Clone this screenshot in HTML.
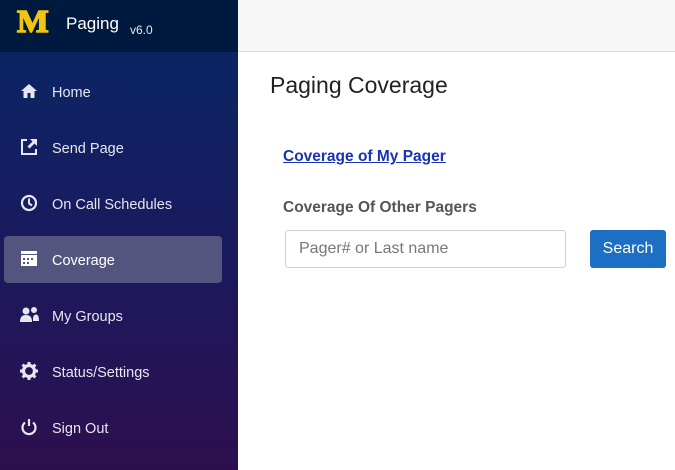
<!DOCTYPE html>
<html><head><meta charset="utf-8"><style>
*{margin:0;padding:0;box-sizing:border-box}
body{width:675px;height:470px;overflow:hidden;font-family:"Liberation Sans",Arial,sans-serif;background:#fff;position:relative}
#side{position:absolute;left:0;top:0;width:238px;height:470px;background:linear-gradient(#0b2564 52px,#1a1a5e 250px,#2d0f4f 470px)}
#hdr{height:52px;background:#001a3f;position:relative}
#logo{position:absolute;left:17px;top:6px;font-family:"Liberation Serif",serif;font-weight:bold;font-size:32px;color:#f2c413;line-height:30px;transform:scaleX(1.05);transform-origin:left;-webkit-text-stroke:1.5px #f2c413}
#title{position:absolute;left:66px;top:14px;color:#fff;font-size:17px}
#ver{position:absolute;left:130px;top:23px;color:#e8e8e8;font-size:12px}
.item{position:absolute;left:4px;width:218px;height:47px;color:#e6e6ee;font-size:14.5px;border-radius:4px}
.item span{position:absolute;left:48px;top:17px}
.item svg{position:absolute;left:16px;top:14px}
.act{background:#54557e;color:#fff}
#topbar{position:absolute;left:238px;top:0;right:0;height:52px;background:#f7f7f7;border-bottom:1px solid #ddd}
h1{position:absolute;left:270px;top:72px;font-weight:normal;font-size:23px;color:#222}
a{position:absolute;left:283px;top:148px;font-size:15.5px;font-weight:bold;color:#1a33b5;text-decoration:underline}
h3{position:absolute;left:283px;top:199px;font-size:15.5px;color:#555}
#inp{position:absolute;left:285px;top:230px;width:281px;height:38px;border:1px solid #ccd;border-radius:3px;font-size:16px;color:#777;padding:9px 13px}
#btn{position:absolute;left:590px;top:230px;width:76px;height:38px;background:#1c6fc2;border-radius:3px;color:#fff;font-size:16px;text-align:center;line-height:37px}
</style></head><body>
<div id="side">
<div id="hdr"><div id="logo">M</div><div id="title">Paging</div><div id="ver">v6.0</div></div>
<div class="item" style="top:68px"><svg width="18" height="18" viewBox="0 0 18 18"><path d="M9 2L1 9h2.5v7h4v-5h3v5h4V9H17z" fill="#e6e6ee"/></svg><span>Home</span></div>
<div class="item" style="top:124px"><svg width="18" height="18" viewBox="0 0 18 18"><path d="M1 1h6v2H3v12h12v-4h2v6H1z" fill="#e6e6ee"/><path d="M10 1h7v7l-2.5-2.5-5 5-2-2 5-5z" fill="#e6e6ee"/></svg><span>Send Page</span></div>
<div class="item" style="top:180px"><svg width="18" height="18" viewBox="0 0 18 18"><circle cx="9" cy="9" r="7" fill="none" stroke="#e6e6ee" stroke-width="2.2"/><path d="M9 4.5V9.5l3 2" fill="none" stroke="#e6e6ee" stroke-width="2"/></svg><span>On Call Schedules</span></div>
<div class="item act" style="top:236px"><svg width="18" height="18" viewBox="0 0 18 18"><path d="M1 1h16v3H1z" fill="#fff"/><path d="M1 5h16v11H1z" fill="#fff"/><g fill="#54557e"><rect x="3" y="8" width="2" height="2"/><rect x="7" y="8" width="2" height="2"/><rect x="11" y="8" width="2" height="2"/><rect x="3" y="12" width="2" height="2"/><rect x="7" y="12" width="2" height="2"/></g></svg><span>Coverage</span></div>
<div class="item" style="top:292px"><svg width="20" height="18" viewBox="0 0 20 18"><circle cx="6" cy="5" r="3.5" fill="#e6e6ee"/><path d="M0 16c0-5 2-7 6-7s6 2 6 7z" fill="#e6e6ee"/><circle cx="14" cy="4" r="3" fill="#e6e6ee"/><path d="M13 15c0-4 0-6 3-6.5 2 0 3 2 3 6.5z" fill="#e6e6ee"/></svg><span>My Groups</span></div>
<div class="item" style="top:348px"><svg width="18" height="18" viewBox="0 0 18 18"><circle cx="9" cy="9" r="5.5" fill="none" stroke="#e6e6ee" stroke-width="3.2"/><g stroke="#e6e6ee" stroke-width="3"><path d="M9 0v4M9 14v4M0 9h4M14 9h4M2.6 2.6l2.8 2.8M12.6 12.6l2.8 2.8M2.6 15.4l2.8-2.8M12.6 5.4l2.8-2.8"/></g></svg><span>Status/Settings</span></div>
<div class="item" style="top:404px"><svg width="18" height="18" viewBox="0 0 18 18"><path d="M5 4.5A6.5 6.5 0 1 0 13 4.5" fill="none" stroke="#e6e6ee" stroke-width="2.2"/><path d="M9 1v7" stroke="#e6e6ee" stroke-width="2.2"/></svg><span>Sign Out</span></div>
</div>
<div id="topbar"></div>
<h1>Paging Coverage</h1>
<a>Coverage of My Pager</a>
<h3>Coverage Of Other Pagers</h3>
<div id="inp">Pager# or Last name</div>
<div id="btn">Search</div>
</body></html>
